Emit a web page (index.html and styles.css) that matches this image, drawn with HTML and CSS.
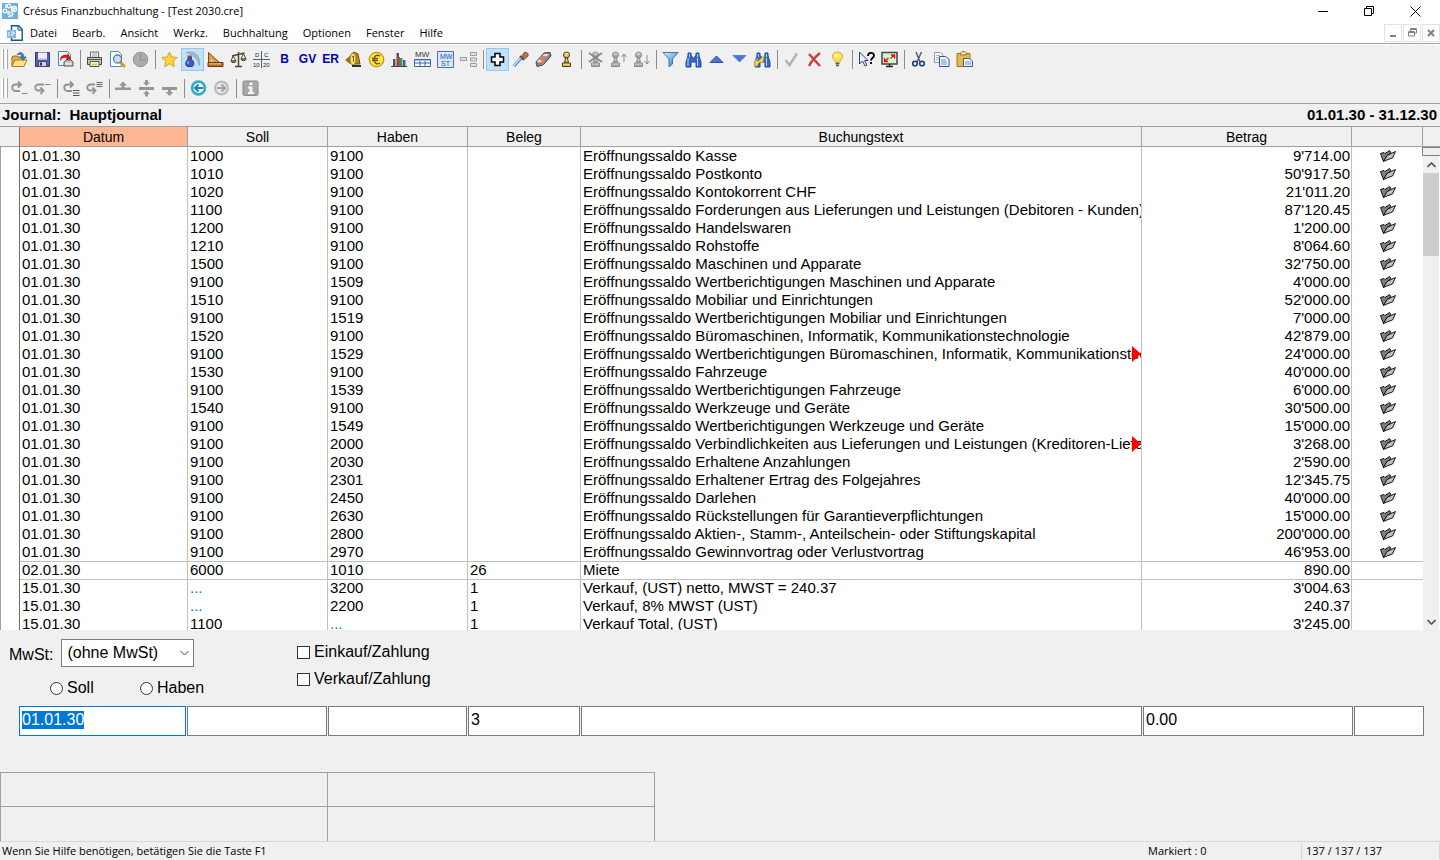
FILE: index.html
```html
<!DOCTYPE html>
<html lang="de">
<head>
<meta charset="utf-8">
<title>Crésus Finanzbuchhaltung - [Test 2030.cre]</title>
<link rel="stylesheet" href="styles.css">
</head>
<body>
<svg class="defs" aria-hidden="true">
  <defs>
    <linearGradient id="g-blue" x1="0" y1="0" x2="1" y2="1"><stop offset="0" stop-color="#e4f4ff"/><stop offset="1" stop-color="#1e6cb8"/></linearGradient>
    <linearGradient id="g-gold" x1="0" y1="0" x2="0" y2="1"><stop offset="0" stop-color="#fff4a8"/><stop offset="1" stop-color="#e3a51c"/></linearGradient>
    <linearGradient id="g-grey" x1="0" y1="0" x2="0" y2="1"><stop offset="0" stop-color="#e6e6e6"/><stop offset="1" stop-color="#8a8a8a"/></linearGradient>
    <symbol id="folder" viewBox="0 0 16 12">
      <path d="M.5 3.500 4 2.500 5 3.500 9.500.5 11 2.500 8 5 3.500 11.500 2.500 9Z" fill="#808080" stroke="#000" stroke-width=".9"/>
      <path d="M3.500 11.500 7 5.500 10 4 15.500 1.500 12.500 8 8 9.500Z" fill="#c0c0c0" stroke="#000" stroke-width=".9"/>
    </symbol>
    <symbol id="pawn" viewBox="0 0 17 17">
      <circle cx="8.500" cy="4" r="3"/><path d="M7.500 7h2l1 5h-4z"/><path d="M4.500 12h8v3.500h-8z"/>
    </symbol>
    <symbol id="binoc" viewBox="0 0 17 17">
      <path d="M3 2h3v3h1v2h3V5h1V2h3v3l2 6v5h-5v-5H6v5H1v-5l2-6z" fill="#3a68c8" stroke="#2148a0"/>
      <path d="M3 7v8M12.500 7v8M4.500 3v3M12.500 3v3" stroke="#b9d4ff" fill="none"/>
    </symbol>
  </defs>
</svg>

<header class="titlebar">
  <svg class="app-icon" width="16" height="16" viewBox="0 0 16 16"><rect width="16" height="16" fill="#6fb0e0"/><g fill="none" stroke="#fff" stroke-width="1.300"><path d="M4 1v4"/><circle cx="7" cy="3" r="1.800"/><circle cx="12" cy="6" r="2.500"/><path d="M10.500 5.500h2.500l-2 2"/><circle cx="3" cy="8" r="1.800"/><path d="M8.500 9H6v2c3-.5 3 3 0 2.500"/><path d="M9 9l2 2-2 3"/></g></svg>
  <h1 class="title">Crésus Finanzbuchhaltung - [Test 2030.cre]</h1>
  <div class="win-buttons">
    <button aria-label="Minimieren"><svg width="11" height="11"><path d="M0 5.500h10" stroke="#000"/></svg></button>
    <button aria-label="Verkleinern"><svg width="11" height="11" fill="none" stroke="#000"><path d="M.5 2.500h7v7h-7zM2.500 2.500v-2h7v7h-2"/></svg></button>
    <button aria-label="Schliessen"><svg width="11" height="11" stroke="#000"><path d="M.5.5l10 10M10.500.5l-10 10"/></svg></button>
  </div>
</header>

<nav class="menubar">
  <svg class="doc-icon" width="16" height="16" viewBox="0 0 16 16"><path d="M4.500 5V.8h7L15.200 4.500v10.700H4.500V13" fill="#fff" stroke="#0a5a8c" stroke-width="1.400"/><path d="M11 1v4h4" fill="none" stroke="#0a5a8c"/><rect y="5" width="9" height="8" fill="#7db9e6"/><path d="M2 7v4M4 7h3v2H5v2" fill="none" stroke="#fff"/></svg>
  <button>Datei</button><button>Bearb.</button><button>Ansicht</button><button>Werkz.</button><button>Buchhaltung</button><button>Optionen</button><button>Fenster</button><button>Hilfe</button>
  <div class="doc-buttons">
    <button aria-label="Dokument minimieren"><svg width="8" height="10"><path d="M1 8h6" stroke="#6f8296" stroke-width="2"/></svg></button>
    <button aria-label="Dokument verkleinern"><svg width="9" height="9" fill="none" stroke="#6f8296"><path d="M.5 4h6v4h-6zM2.500 4V1h6v4h-2"/><path d="M.5 4h6M2.500 1h6" stroke-width="2"/></svg></button>
    <button aria-label="Dokument schliessen"><svg width="8" height="8" stroke="#6f8296" stroke-width="2"><path d="M1 1l6 6M7 1L1 7"/></svg></button>
  </div>
</nav>

<section class="toolbars">
  <div class="toolbar">
    <span class="grip"></span>
    <button aria-label="Öffnen"><svg viewBox="0 0 17 17"><path d="M1 15V6l1-1h4l1 1h6v9z" fill="#e0b23c" stroke="#9a7418"/><path d="M1 15.500L4 9h12l-3 6.500z" fill="#ffe48a" stroke="#a67f1f"/><path d="M6 4c2-4 7-3 7 2h2.500L12 9.500 9 6h2c0-3-3-3-5-2z" fill="#3f7fbd" stroke="#275f98" stroke-width=".6"/></svg></button>
    <button aria-label="Speichern"><svg viewBox="0 0 17 17"><path d="M1.500 1.500h14v14h-14z" fill="#5a5fb4" stroke="#30357e"/><path d="M4 1.500h9v7H4z" fill="#eceefa"/><path d="M4 8h9" stroke="#b4b8dc"/><path d="M4.500 10.500h8v5h-8z" fill="#d2d2dc" stroke="#3a3f86"/><path d="M6 11.500h2v3H6z" fill="#333"/></svg></button>
    <button aria-label="PDF drucken"><svg viewBox="0 0 17 17"><path d="M1.500.5h9l3 3v11h-12z" fill="#f4f8ff" stroke="#4f7fb8"/><path d="M3 10c0-5 3-7 7-6l1-2 3 6-5 2 .5-3C7 6 5 7 3 10z" fill="#d81818"/><path d="M7 11l2-2h5l2 2v4H7z" fill="#c8c8c8" stroke="#555"/><path d="M8.500 13h6" stroke="#fff"/></svg></button>
    <span class="sep"></span>
    <button aria-label="Drucken"><svg viewBox="0 0 17 17"><path d="M4.500 6V1h8v5" fill="#fff" stroke="#666"/><path d="M6 3h5M6 5h5" stroke="#999"/><path d="M1.500 6.500h14v7h-14z" fill="#c9c9c9" stroke="#4a4a4a"/><path d="M2 8.500h13" stroke="#555"/><path d="M4 10.500h9v5H4z" fill="#fff8c0" stroke="#555"/><path d="M6 12.500h5v2H6z" fill="#e6c83c"/></svg></button>
    <button aria-label="Vorschau"><svg viewBox="0 0 17 17"><path d="M1.500.5h8l3 3v12h-11z" fill="#fff" stroke="#5a86c0"/><path d="M11 11l4 4" stroke="#d99a20" stroke-width="3" stroke-linecap="round"/><circle cx="8.500" cy="8" r="4" fill="#c4e2f8" stroke="#5b7ca0" stroke-width="1.300"/></svg></button>
    <button aria-label="Uhr"><svg viewBox="0 0 17 17"><circle cx="8.500" cy="8.500" r="7.200" fill="#adadad" stroke="#8d8d8d"/><path d="M8.500 2v7H14" stroke="#8b8b8b" fill="none"/></svg></button>
    <span class="sep"></span>
    <button aria-label="Favoriten"><svg viewBox="0 0 17 17"><path d="M8.500 1l2.200 5 5.500.5-4.200 3.700 1.300 5.500-4.800-3-4.800 3L5 10.200.8 6.500 6.300 6z" fill="#ffd640" stroke="#dca018"/></svg></button>
    <button class="on" aria-label="Journal"><svg viewBox="0 0 17 17"><path d="M4 6.500h3.500v2c3 1.500 3 7 0 7H4c-3 0-3-5.500 0-7z" fill="#3e58c8" stroke="#27367e"/><path d="M3.500 5.500h4.500" stroke="#8a5a28" stroke-width="2"/><path d="M4 10v3" stroke="#b9c8ff"/><path d="M2 1.500c9-2 14.500 3 13.500 13-1.500-4-2.500-6.500-5-8C8.500 3.500 6 2.500 2 1.500z" fill="#9dbdd8" stroke="#6f93b4" stroke-width=".6"/></svg></button>
    <button aria-label="Kontenplan"><svg viewBox="0 0 17 17"><path d="M1.500 1.500l12 11h-12z" fill="#e09a48" stroke="#85460f"/><path d="M4 8v2.500h2.500z" fill="#efefef"/><path d="M1 11.500h15v4H1z" fill="#bd7428" stroke="#6e3a0c"/><path d="M3 12v1.500M5 12v1.500M7 12v1.500M9 12v1.500M11 12v1.500M13 12v1.500" stroke="#ffe0a8"/></svg></button>
    <button aria-label="Bilanz"><svg viewBox="0 0 17 17" fill="none" stroke="#4c4634"><path d="M8.500 1v14M5 15.500h7M2 5l12.500-3" stroke-width="1.500"/><path d="M3 5L1 10h5zM13.500 2.500L11 8h5z"/><path d="M1 10h5l-1 1.500H2zM11 8h5l-1 1.500h-3z" fill="#d6a63a"/></svg></button>
    <button aria-label="Kontoauszug"><svg viewBox="0 0 17 17"><path d="M8.500 0v17M0 8.500h17" stroke="#486478"/><text class="micro" x="2" y="6">D</text><text class="micro" x="11" y="6">C</text><text class="micro" x="0" y="16">10</text><text class="micro" x="10" y="16">20</text></svg></button>
    <button class="word">B</button>
    <button class="word">GV</button>
    <button class="word">ER</button>
    <button aria-label="Budget"><svg viewBox="0 0 17 17"><path d="M9 1l4 2 2 10H6L5 5z" fill="#b58b1a" stroke="#6a5010"/><path d="M0 9l5-4v8z" fill="#8e7430"/><path d="M8 2c4 0 4 12 0 12S4 2 8 2z" fill="#ffe268" stroke="#9a7a18"/><path d="M7 6l1.500-1v6" stroke="#806010" fill="none"/><path d="M7 15h9" stroke="#333" stroke-width="2"/></svg></button>
    <button aria-label="Währungen"><svg viewBox="0 0 17 17"><circle cx="8.500" cy="8.500" r="7.200" fill="#ffe748" stroke="#c39a18" stroke-width="1.300"/><path d="M12 5C9 3 6 5 6 8.500s3 5.500 6 3.500M4 7.500h6M4 9.500h6" fill="none" stroke="#6e5a08" stroke-width="1.400"/></svg></button>
    <button aria-label="Grafik"><svg viewBox="0 0 17 17"><path d="M2 15V8h2.500v7zM5.500 15V2H8v13z" fill="#555"/><path d="M7 15V6h2v9z" fill="#c8443a"/><path d="M9 15V7h2.500v8z" fill="#3d9a48"/><path d="M12 15V9h2.500v6z" fill="#4e58b4"/><path d="M0 15.500h16" stroke="#444"/></svg></button>
    <button aria-label="MwSt-Tabelle"><svg viewBox="0 0 17 17"><text class="mini" x="1" y="6">MW</text><path d="M.5 8.500h16v7H.5zM.5 12h16M6 8.500v7M11 8.500v7" fill="#fff" stroke="#3865a0"/><path d="M1 9.500h15" stroke="#a8c4e8"/></svg></button>
    <button aria-label="MwSt-Abrechnung"><svg viewBox="0 0 17 17"><path d="M.5.5h16v16H.5z" fill="#d9e9fb" stroke="#4674ac"/><text class="mini blue" x="3" y="8">MW</text><text class="mini blue" x="4" y="15">ST</text></svg></button>
    <button aria-label="Struktur"><svg viewBox="0 0 17 17" fill="#e3e3e3" stroke="#9b9b9b"><path d="M.5 6.500h6v3h-6zM10.500 1.500h6v3h-6zM10.500 7h6v3h-6zM10.500 12.500h6v3h-6z"/></svg></button>
    <span class="sep"></span>
    <button class="on" aria-label="Neu"><svg viewBox="0 0 17 17"><path d="M6 2.500h5V6h3.500v5H11v3.500H6V11H2.500V6H6z" fill="#fff" stroke="#000" stroke-width="1.500"/></svg></button>
    <button aria-label="Pipette"><svg viewBox="0 0 17 17"><path d="M2 15l7-8" stroke="#3c82d0" stroke-width="3.200"/><path d="M2 14.500l7-8" stroke="#c8e6ff" stroke-width="1.500"/><path d="M8 5l4 4" stroke="#555" stroke-width="2"/><path d="M10 5l2-3c2.500-2 5.500 1 3.500 3.500L12.500 8z" fill="#b87850" stroke="#7a4426"/></svg></button>
    <button aria-label="Löschen"><svg viewBox="0 0 17 17"><path d="M1 11L9 2l6-.5 1 3.500-8 9-6 1.500z" fill="#888" stroke="#444"/><path d="M1.500 11L9 3h5l-8 8.500z" fill="#ddd"/><path d="M4 8l3-3h5l-3 4v4l-2 1v-4z" fill="#e47a58"/></svg></button>
    <button aria-label="Stempel"><svg viewBox="0 0 17 17" fill="url(#g-gold)" stroke="#463a22"><use href="#pawn"/></svg></button>
    <span class="sep"></span>
    <button aria-label="Stempel entfernen" disabled><svg viewBox="0 0 17 17" fill="url(#g-grey)" stroke="#8a8a8a"><use href="#pawn"/><path d="M2 2l13 9M15 2L2 11" stroke-width="2"/></svg></button>
    <button aria-label="Stempel hinauf" disabled><svg viewBox="0 0 17 17" fill="url(#g-grey)" stroke="#8a8a8a"><use href="#pawn" x="-3"/><path d="M14 11V3M11.500 6L14 3l2.500 3" fill="none"/></svg></button>
    <button aria-label="Stempel hinunter" disabled><svg viewBox="0 0 17 17" fill="url(#g-grey)" stroke="#8a8a8a"><use href="#pawn" x="-3"/><path d="M14 4v9M11.500 10l2.500 3 2.500-3" fill="none"/></svg></button>
    <span class="sep"></span>
    <button aria-label="Filter"><svg viewBox="0 0 17 17"><path d="M1 1.500h15L10.500 8v5L7 16V8z" fill="url(#g-blue)" stroke="#3a78b8"/></svg></button>
    <button aria-label="Suchen"><svg viewBox="0 0 17 17"><use href="#binoc"/></svg></button>
    <button aria-label="Vorheriges"><svg viewBox="0 0 17 17"><path d="M2 11.500L8.500 5l6.500 6.500z" fill="#4f74cf" stroke="#2c4fae"/></svg></button>
    <button aria-label="Nächstes"><svg viewBox="0 0 17 17"><path d="M2 4.500h13L8.500 11z" fill="#4f74cf" stroke="#5a82dc"/></svg></button>
    <button aria-label="Ersetzen"><svg viewBox="0 0 17 17"><use href="#binoc"/><path d="M1 16V9l3 1.500L10.500 4 9 11l-4 .5L3.500 14z" fill="#ffdc30" stroke="#c89a10" stroke-width=".7"/></svg></button>
    <span class="sep"></span>
    <button aria-label="Bestätigen" disabled><svg viewBox="0 0 17 17"><path d="M2.500 9L6.500 14 14 2.500" stroke="#b3b3b3" stroke-width="2.500" fill="none"/></svg></button>
    <button aria-label="Abbrechen"><svg viewBox="0 0 17 17"><path d="M3 3l11 12M14 2C9 6 6 9 3 15" stroke="#c8433c" stroke-width="2.500" fill="none"/></svg></button>
    <button aria-label="Tipp"><svg viewBox="0 0 17 17"><path d="M6 11C6 9 3.500 8 3.500 5.500c0-6 10-6 10 0C13.500 8 11 9 11 11z" fill="#ffe458" stroke="#dba828"/><circle cx="7" cy="4.500" r="1.500" fill="#fffbe0"/><path d="M6.500 12.500h4M7 14.500h3" stroke="#555" stroke-width="1.500"/></svg></button>
    <span class="sep"></span>
    <button aria-label="Kontexthilfe"><svg viewBox="0 0 17 17"><path d="M1.500 1v12l3-3 2.500 5 2-1-2.500-4.500H10z" fill="#e6effc" stroke="#2c4678"/><path d="M10 5c0-4 6-4 6-.5C16 7 13 7 13 9.500M13 11v2" fill="none" stroke="#000" stroke-width="1.800"/></svg></button>
    <button aria-label="Vollbild"><svg viewBox="0 0 17 17"><path d="M1 1.500h15v11.500H1z" fill="#d4f4d0" stroke="#444" stroke-width="1.500"/><path d="M5 15.500h7M8.500 13v2" stroke="#222" stroke-width="1.500"/><path d="M3.500 10.500l4-3.500M3.500 7v3.500H7M13.500 4l-4 3.500M10 4h3.500v3.500" fill="none" stroke="#e01414" stroke-width="1.300"/></svg></button>
    <span class="sep"></span>
    <button aria-label="Ausschneiden"><svg viewBox="0 0 17 17" fill="none"><path d="M6 1l4 10M11.500 1L7 11" stroke="#4f6078" stroke-width="1.500"/><circle cx="5" cy="12.500" r="2.300" stroke="#1c3c7c" stroke-width="1.600"/><circle cx="12" cy="12.500" r="2.300" stroke="#1c3c7c" stroke-width="1.600"/></svg></button>
    <button aria-label="Kopieren"><svg viewBox="0 0 17 17" fill="#f4f9ff"><path d="M1.500 1.500h6l2.500 2.500v7.500H1.500z" stroke="#8e9aac"/><path d="M3 4.500h4M3 6.500h4M3 8.500h4" stroke="#a8b4c8"/><path d="M6.500 5.500h6l3.500 3v7H6.500z" stroke="#2f5494"/><path d="M8 9h5M8 11h6M8 13h6" stroke="#6a90cc"/></svg></button>
    <button aria-label="Einfügen"><svg viewBox="0 0 17 17"><path d="M1 2.500h13v13H1z" fill="#e8b850" stroke="#a6761c"/><path d="M4.500 4V2l2-1.500h2L10.500 2v2z" fill="#f0e0a8" stroke="#8e7430"/><path d="M7.500 7.500h6l3 2.500v5.500h-9z" fill="#f4f9ff" stroke="#3c5c98"/><path d="M9 11h6M9 13h6" stroke="#6a90cc"/></svg></button>
  </div>
  <div class="toolbar">
    <span class="grip"></span>
    <button aria-label="Zeile einfügen" disabled><svg viewBox="0 0 17 17"><path d="M9 11H5C0 11 0 4.500 5 4.500h4M7 1.500l3 3-3 3" fill="none" stroke="#929292" stroke-width="1.800"/><path d="M11 13.500h5.500" stroke="#8a8a8a"/></svg></button>
    <button aria-label="Zeile davor" disabled><svg viewBox="0 0 17 17"><path d="M10 4.500H5C0 4.500 0 10.500 5 10.500h3M6.500 7.500l3 3-3 3.500" fill="none" stroke="#929292" stroke-width="1.800"/><path d="M11 4.500h5.500" stroke="#8a8a8a"/></svg></button>
    <span class="sep"></span>
    <button aria-label="Zeilen einfügen" disabled><svg viewBox="0 0 17 17"><path d="M9 11H5C0 11 0 4.500 5 4.500h4M7 1.500l3 3-3 3" fill="none" stroke="#929292" stroke-width="1.800"/><path d="M10 10.500h6.500M10 13h6.500M10 15.500h6.500" stroke="#555"/></svg></button>
    <button aria-label="Zeilen davor" disabled><svg viewBox="0 0 17 17"><path d="M9 4.500H5C0 4.500 0 10.500 5 10.500h3M6.500 7.500l3 3-3 3.500" fill="none" stroke="#929292" stroke-width="1.800"/><path d="M10.500 2.500h6M10.500 4.500h6M10.500 6.500h6" stroke="#666"/></svg></button>
    <span class="sep"></span>
    <button aria-label="Nach oben" disabled><svg viewBox="0 0 17 17" fill="#969696"><path d="M0 7.500h16v2.500H0zM8 1.500l4 4H9.500V8h-3V5.500H4z"/></svg></button>
    <button aria-label="Zusammenziehen" disabled><svg viewBox="0 0 17 17" fill="#969696"><path d="M1 7h15v3H1zM7 0h3v2.500h2L8.500 6 5 2.500h2zM7 16.500h3V14h2l-3.500-3.500L5 14h2z"/></svg></button>
    <button aria-label="Nach unten" disabled><svg viewBox="0 0 17 17" fill="#969696"><path d="M1 7h15v3H1zM7 9h3v3h2.500l-4 4-4-4H7z"/></svg></button>
    <span class="sep"></span>
    <button aria-label="Zurück"><svg viewBox="0 0 17 17"><circle cx="8.500" cy="8" r="6.400" fill="#fff" stroke="#35aacd" stroke-width="2.600"/><path d="M13 8H5M8.500 4.500L5 8l3.500 3.500" fill="none" stroke="#1687b4" stroke-width="2"/></svg></button>
    <button aria-label="Vorwärts" disabled><svg viewBox="0 0 17 17"><circle cx="8.500" cy="8" r="6.400" fill="#e8e8e8" stroke="#bcbcbc" stroke-width="2.200"/><path d="M4 8h8M8.500 4.500L12 8l-3.500 3.500" fill="none" stroke="#a0a0a0" stroke-width="2"/></svg></button>
    <span class="sep"></span>
    <button aria-label="Info" disabled><svg viewBox="0 0 17 17"><rect x="1" y="1" width="15" height="14.500" rx="1.500" fill="#a8a8a8" stroke="#888"/><path d="M7.500 2.500h3v2.500h-3zM6 6.500h4.500v5.500H12v2H6v-2h1.500V8.500H6z" fill="#f4f4f4"/></svg></button>
  </div>
</section>

<main class="journal">
  <h2 class="journal-title"><span>Journal:&nbsp; Hauptjournal</span><span>01.01.30 - 31.12.30</span></h2>
  <div class="grid-pane">
    <div class="grid-box">
    <table class="grid">
      <colgroup><col class="c-gutter"><col class="c-date"><col class="c-acc"><col class="c-acc"><col class="c-doc"><col><col class="c-sum"><col class="c-mark"></colgroup>
      <thead><tr><th></th><th class="sorted">Datum</th><th>Soll</th><th>Haben</th><th>Beleg</th><th>Buchungstext</th><th>Betrag</th><th></th></tr></thead>
      <tbody>
        <tr><td></td><td>01.01.30</td><td>1000</td><td>9100</td><td></td><td>Eröffnungssaldo Kasse</td><td>9'714.00</td><td><svg><use href="#folder"/></svg></td></tr>
        <tr><td></td><td>01.01.30</td><td>1010</td><td>9100</td><td></td><td>Eröffnungssaldo Postkonto</td><td>50'917.50</td><td><svg><use href="#folder"/></svg></td></tr>
        <tr><td></td><td>01.01.30</td><td>1020</td><td>9100</td><td></td><td>Eröffnungssaldo Kontokorrent CHF</td><td>21'011.20</td><td><svg><use href="#folder"/></svg></td></tr>
        <tr><td></td><td>01.01.30</td><td>1100</td><td>9100</td><td></td><td>Eröffnungssaldo Forderungen aus Lieferungen und Leistungen (Debitoren - Kunden)</td><td>87'120.45</td><td><svg><use href="#folder"/></svg></td></tr>
        <tr><td></td><td>01.01.30</td><td>1200</td><td>9100</td><td></td><td>Eröffnungssaldo Handelswaren</td><td>1'200.00</td><td><svg><use href="#folder"/></svg></td></tr>
        <tr><td></td><td>01.01.30</td><td>1210</td><td>9100</td><td></td><td>Eröffnungssaldo Rohstoffe</td><td>8'064.60</td><td><svg><use href="#folder"/></svg></td></tr>
        <tr><td></td><td>01.01.30</td><td>1500</td><td>9100</td><td></td><td>Eröffnungssaldo Maschinen und Apparate</td><td>32'750.00</td><td><svg><use href="#folder"/></svg></td></tr>
        <tr><td></td><td>01.01.30</td><td>9100</td><td>1509</td><td></td><td>Eröffnungssaldo Wertberichtigungen Maschinen und Apparate</td><td>4'000.00</td><td><svg><use href="#folder"/></svg></td></tr>
        <tr><td></td><td>01.01.30</td><td>1510</td><td>9100</td><td></td><td>Eröffnungssaldo Mobiliar und Einrichtungen</td><td>52'000.00</td><td><svg><use href="#folder"/></svg></td></tr>
        <tr><td></td><td>01.01.30</td><td>9100</td><td>1519</td><td></td><td>Eröffnungssaldo Wertberichtigungen Mobiliar und Einrichtungen</td><td>7'000.00</td><td><svg><use href="#folder"/></svg></td></tr>
        <tr><td></td><td>01.01.30</td><td>1520</td><td>9100</td><td></td><td>Eröffnungssaldo Büromaschinen, Informatik, Kommunikationstechnologie</td><td>42'879.00</td><td><svg><use href="#folder"/></svg></td></tr>
        <tr><td></td><td>01.01.30</td><td>9100</td><td>1529</td><td></td><td class="more">Eröffnungssaldo Wertberichtigungen Büromaschinen, Informatik, Kommunikationstechnologie</td><td>24'000.00</td><td><svg><use href="#folder"/></svg></td></tr>
        <tr><td></td><td>01.01.30</td><td>1530</td><td>9100</td><td></td><td>Eröffnungssaldo Fahrzeuge</td><td>40'000.00</td><td><svg><use href="#folder"/></svg></td></tr>
        <tr><td></td><td>01.01.30</td><td>9100</td><td>1539</td><td></td><td>Eröffnungssaldo Wertberichtigungen Fahrzeuge</td><td>6'000.00</td><td><svg><use href="#folder"/></svg></td></tr>
        <tr><td></td><td>01.01.30</td><td>1540</td><td>9100</td><td></td><td>Eröffnungssaldo Werkzeuge und Geräte</td><td>30'500.00</td><td><svg><use href="#folder"/></svg></td></tr>
        <tr><td></td><td>01.01.30</td><td>9100</td><td>1549</td><td></td><td>Eröffnungssaldo Wertberichtigungen Werkzeuge und Geräte</td><td>15'000.00</td><td><svg><use href="#folder"/></svg></td></tr>
        <tr><td></td><td>01.01.30</td><td>9100</td><td>2000</td><td></td><td class="more">Eröffnungssaldo Verbindlichkeiten aus Lieferungen und Leistungen (Kreditoren-Lieferanten)</td><td>3'268.00</td><td><svg><use href="#folder"/></svg></td></tr>
        <tr><td></td><td>01.01.30</td><td>9100</td><td>2030</td><td></td><td>Eröffnungssaldo Erhaltene Anzahlungen</td><td>2'590.00</td><td><svg><use href="#folder"/></svg></td></tr>
        <tr><td></td><td>01.01.30</td><td>9100</td><td>2301</td><td></td><td>Eröffnungssaldo Erhaltener Ertrag des Folgejahres</td><td>12'345.75</td><td><svg><use href="#folder"/></svg></td></tr>
        <tr><td></td><td>01.01.30</td><td>9100</td><td>2450</td><td></td><td>Eröffnungssaldo Darlehen</td><td>40'000.00</td><td><svg><use href="#folder"/></svg></td></tr>
        <tr><td></td><td>01.01.30</td><td>9100</td><td>2630</td><td></td><td>Eröffnungssaldo Rückstellungen für Garantieverpflichtungen</td><td>15'000.00</td><td><svg><use href="#folder"/></svg></td></tr>
        <tr><td></td><td>01.01.30</td><td>9100</td><td>2800</td><td></td><td>Eröffnungssaldo Aktien-, Stamm-, Anteilschein- oder Stiftungskapital</td><td>200'000.00</td><td><svg><use href="#folder"/></svg></td></tr>
        <tr><td></td><td>01.01.30</td><td>9100</td><td>2970</td><td></td><td>Eröffnungssaldo Gewinnvortrag oder Verlustvortrag</td><td>46'953.00</td><td><svg><use href="#folder"/></svg></td></tr>
        <tr class="newday"><td></td><td>02.01.30</td><td>6000</td><td>1010</td><td>26</td><td>Miete</td><td>890.00</td><td></td></tr>
        <tr class="newday"><td></td><td>15.01.30</td><td class="split">...</td><td>3200</td><td>1</td><td>Verkauf, (UST) netto, MWST = 240.37</td><td>3'004.63</td><td></td></tr>
        <tr><td></td><td>15.01.30</td><td class="split">...</td><td>2200</td><td>1</td><td>Verkauf, 8% MWST (UST)</td><td>240.37</td><td></td></tr>
        <tr><td></td><td>15.01.30</td><td>1100</td><td class="split">...</td><td>1</td><td>Verkauf Total, (UST)</td><td>3'245.00</td><td></td></tr>
      </tbody>
    </table>
    </div>
    <div class="scroll">
      <span class="scroll-head"></span>
      <span class="splitter"></span>
      <div class="track">
        <button class="arrow" aria-label="Nach oben blättern"><svg width="9" height="6"><path d="M.5 5L4.500 1l4 4" fill="none" stroke="#505050" stroke-width="1.600"/></svg></button>
        <span class="thumb"></span>
        <button class="arrow down" aria-label="Nach unten blättern"><svg width="9" height="6"><path d="M.5 1l4 4 4-4" fill="none" stroke="#505050" stroke-width="1.600"/></svg></button>
      </div>
    </div>
  </div>
</main>

<form class="entry">
  <div class="options">
    <div class="vat">
      <div class="vat-row"><label for="mwst">MwSt:</label><select id="mwst"><option>(ohne MwSt)</option></select></div>
      <div class="sides">
        <label><input type="radio" name="side">Soll</label>
        <label><input type="radio" name="side">Haben</label>
      </div>
    </div>
    <div class="kinds">
      <label><input type="checkbox">Einkauf/Zahlung</label>
      <label><input type="checkbox">Verkauf/Zahlung</label>
    </div>
  </div>
  <div class="fields">
    <input id="datum" type="text" aria-label="Datum" value="01.01.30">
    <input type="text" aria-label="Soll">
    <input type="text" aria-label="Haben">
    <input type="text" aria-label="Beleg" value="3">
    <input type="text" aria-label="Buchungstext">
    <input type="text" aria-label="Betrag" value="0.00">
    <input type="text" aria-label="Markierung">
  </div>
  <div class="balances"><span></span><span></span><span></span><span></span></div>
</form>

<footer class="status">
  <span class="hint">Wenn Sie Hilfe benötigen, betätigen Sie die Taste F1</span>
  <span class="marked">Markiert : 0</span>
  <span class="count">137 / 137 / 137</span>
</footer>
<script src="app.js"></script>
</body>
</html>
```
FILE: styles.css
```css
:root {
  --face: #f0f0f0;
  --line: #a0a0a0;
  --grid: #c0c0c0;
  --ui: "Open Sans", "Noto Sans", sans-serif;
  --sans: "Liberation Sans", Arial, sans-serif;
}
* { box-sizing: border-box; }
body {
  margin: 0;
  height: 100vh;
  display: flex;
  flex-direction: column;
  overflow: hidden;
  background: var(--face);
  color: #000;
  font: 15px/18px var(--sans);
}
button { margin: 0; padding: 0; border: 0; background: none; color: inherit; font: inherit; }
svg { display: block; flex: none; }
.defs { position: absolute; width: 0; height: 0; }

.titlebar, .menubar {
  display: flex;
  align-items: center;
  background: #fff;
  font: 11px/16px var(--ui);
}
.titlebar { height: 22px; padding-left: 2px; gap: 5px; }
.title { margin: 0; font: inherit; flex: 1; }
.win-buttons { display: flex; align-self: stretch; padding-right: 2px; }
.win-buttons button { width: 46px; display: flex; align-items: center; justify-content: center; }
.menubar { height: 21px; padding-left: 7px; gap: 15px; }
.doc-icon { margin-right: -8px; }
.doc-buttons { display: flex; gap: 1px; margin-left: auto; }
.doc-buttons button {
  width: 18px; height: 18px;
  display: flex; align-items: center; justify-content: center;
  border: 1px solid #e3e3e3;
}

.toolbars { border-top: 1px solid var(--line); border-bottom: 1px solid var(--line); }
.toolbar { display: flex; align-items: center; height: 30px; }
.toolbar:first-child { height: 29px; border-top: 1px solid #fff; }
.toolbar button { width: 23px; height: 23px; display: flex; align-items: center; justify-content: center; }
.toolbar svg { width: 17px; height: 17px; }
.toolbar .on { background: #c2e0f7; border: 1px solid #90c8f6; }
.toolbar .word { color: #0000b0; font-weight: bold; font-size: 12px; }
.micro { font: 6px "Liberation Sans", sans-serif; fill: #222; }
.mini { font: 8px "Liberation Sans", sans-serif; fill: #333; }
.mini.blue { fill: #1f58a0; font-size: 7px; }
.grip { width: 8px; height: 20px; position: relative; }
.grip::before, .grip::after {
  content: ""; position: absolute; top: 0; bottom: 0; left: 1px; width: 2px;
  border-right: 1px solid #a8a8a8; background: #fff;
}
.grip::after { left: 5px; }
.sep { width: 6px; height: 19px; background: linear-gradient(#8c8c8c, #8c8c8c) center / 1px 100% no-repeat; }

.journal { flex: 1; min-height: 0; display: flex; flex-direction: column; }
.journal-title {
  display: flex; justify-content: space-between;
  margin: 0; padding: 2px 3px 2px 2px;
  border-bottom: 1px solid var(--line);
  font: bold 15px/18px var(--sans);
}
.grid-pane { flex: 1; min-height: 0; display: flex; align-items: stretch; overflow: hidden; background: #fff; }
.grid-box { flex: 1; min-width: 0; }
.grid { width: 100%; table-layout: fixed; border-spacing: 0; }
.c-gutter { width: 20px; }
.c-date { width: 168px; }
.c-acc { width: 140px; }
.c-doc { width: 113px; }
.c-sum { width: 210px; }
.c-mark { width: 71px; }
.grid th {
  height: 20px; padding: 0;
  background: var(--face);
  border-right: 1px solid var(--line);
  border-bottom: 1px solid var(--line);
  font-size: 14px;
  font-weight: normal;
}
.grid th.sorted { background: #ffb793; }
.grid td {
  height: 18px; padding: 0 2px; line-height: 17px;
  border-right: 1px solid var(--grid);
  white-space: nowrap; overflow: hidden;
  vertical-align: top;
}
.grid td:nth-child(1) { border-left: 1px solid var(--line); border-right-color: #707070; }
.grid th:nth-child(1) { border-right-color: #707070; }
.grid td:nth-child(7) { text-align: right; padding-right: 1px; }
.grid td:nth-child(8) { border-right: 0; }
.grid td svg { width: 16px; height: 12px; margin: 3px auto 0; }
.grid .newday td:not(:first-child) { box-shadow: inset 0 1px var(--grid); }
.grid .split { color: #0078d7; }
.grid .more { position: relative; }
.grid .more::after {
  content: ""; position: absolute; right: 0; top: 1px;
  border: solid transparent; border-width: 8px 0 8px 9px; border-left-color: #f00;
}
.scroll { width: 17px; display: flex; flex-direction: column; }
.scroll-head { height: 20px; background: var(--face); border-bottom: 1px solid var(--line); }
.splitter { height: 9px; margin-left: -1px; background: var(--face); border: solid #808080; border-width: 1px 0 1px 1px; }
.track { flex: 1; display: flex; flex-direction: column; margin-right: 1px; background: var(--face); }
.arrow { height: 17px; display: flex; align-items: center; justify-content: center; }
.arrow.down { margin-top: auto; }
.thumb { height: 83px; background: #cdcdcd; }

.entry { font-size: 16px; }
.entry label { display: flex; align-items: center; line-height: 20px; }
.options { display: flex; padding-top: 9px; }
.vat { width: 297px; }
.vat-row { display: flex; align-items: center; gap: 8px; padding-left: 9px; }
.vat-row label { padding-top: 3px; }
.vat-row select {
  width: 133px; height: 28px; padding: 0 20px 0 5px;
  appearance: none; border: 1px solid #7a7a7a; border-radius: 0;
  color: #000; font: inherit;
  background: #fff url("data:image/svg+xml,%3Csvg xmlns='http://www.w3.org/2000/svg' width='9' height='6'%3E%3Cpath d='M.5 1l4 4 4-4' fill='none' stroke='%23444'/%3E%3C/svg%3E") right 4px center no-repeat;
}
.sides { display: flex; padding: 11px 0 0 50px; }
.sides label { width: 90px; }
.entry input[type="radio"], .entry input[type="checkbox"] {
  appearance: none; width: 13px; height: 13px; margin: 0 4px 0 0;
  border: 1px solid #333; background: #fff;
}
.entry input[type="radio"] { border-radius: 50%; }
.kinds { display: flex; flex-direction: column; gap: 7px; padding-top: 3px; }
.fields {
  display: grid;
  grid-template-columns: 167px 140px 139px 112px 1fr 210px 70px;
  gap: 1px;
  padding: 8px 16px 0 19px;
}
.fields input {
  min-width: 0; height: 30px; padding: 0 2px 2px;
  border: 1px solid #7a7a7a; border-radius: 0; outline: 0;
  background: #fff; color: #000; font: 16px/20px var(--sans);
}
.fields input:focus { border-color: #0078d7; }
.fields input::selection { background: #0078d7; color: #fff; }
.balances {
  display: grid; grid-template-columns: 1fr 1fr; grid-auto-rows: 34px;
  width: 655px; margin-top: 36px;
  border: solid var(--line); border-width: 1px 1px 0 1px;
}
.balances span:nth-child(odd) { border-right: 1px solid var(--line); }
.balances span:nth-child(-n+2) { border-bottom: 1px solid var(--line); }

.status {
  display: flex; align-items: center; height: 19px;
  border-top: 1px solid #d7d7d7;
  font: 11px/16px var(--ui);
}
.hint { flex: 1; padding-left: 2px; }
.marked { width: 153px; }
.count { width: 139px; padding-left: 4px; border: solid #d7d7d7; border-width: 0 1px; }
```
FILE: app.js
```js
const dateField = document.getElementById("datum");
dateField.focus();
dateField.select();
```
